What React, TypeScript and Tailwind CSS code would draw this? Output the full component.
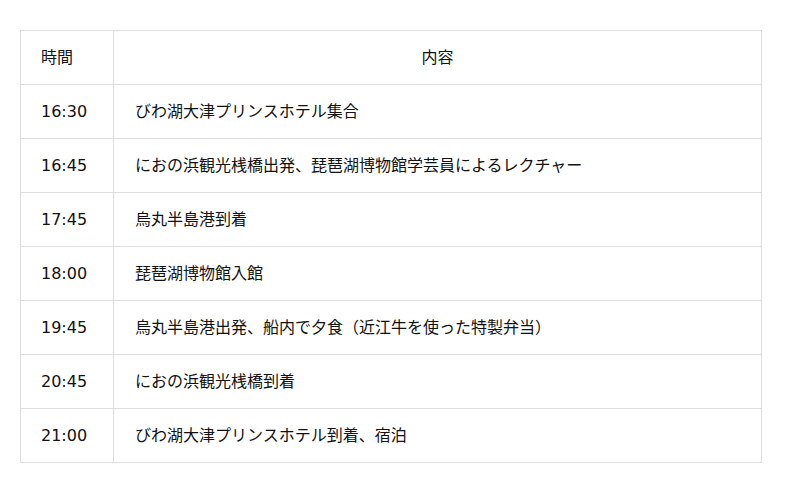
import React from "react";

const rows: [string, string][] = [
  ["16:30", "びわ湖大津プリンスホテル集合"],
  ["16:45", "におの浜観光桟橋出発、琵琶湖博物館学芸員によるレクチャー"],
  ["17:45", "烏丸半島港到着"],
  ["18:00", "琵琶湖博物館入館"],
  ["19:45", "烏丸半島港出発、船内で夕食（近江牛を使った特製弁当）"],
  ["20:45", "におの浜観光桟橋到着"],
  ["21:00", "びわ湖大津プリンスホテル到着、宿泊"],
];

export default function App() {
  return (
    <div
      className="w-[800px] h-[493px] bg-white pt-[30px] pl-[20px]"
      style={{ fontFamily: '"DejaVu Sans", "Noto Sans CJK JP", sans-serif' }}
    >
      <table className="w-[742px] border-collapse text-[16px] text-[#111]">
        <tbody>
          <tr className="h-[54px]">
            <td className="w-[93px] border border-[#ddd] pl-[20px]">時間</td>
            <td className="border border-[#ddd] border-l-[#999] text-center">内容</td>
          </tr>
          {rows.map(([t, c]) => (
            <tr key={t} className="h-[54px]">
              <td className="border border-[#ddd] border-t-[#b5b5b5] border-l-[#ddd] pl-[20px]">{t}</td>
              <td className="border border-[#ddd] border-t-[#b5b5b5] border-l-[#999] pl-[21px]">{c}</td>
            </tr>
          ))}
        </tbody>
      </table>
    </div>
  );
}
